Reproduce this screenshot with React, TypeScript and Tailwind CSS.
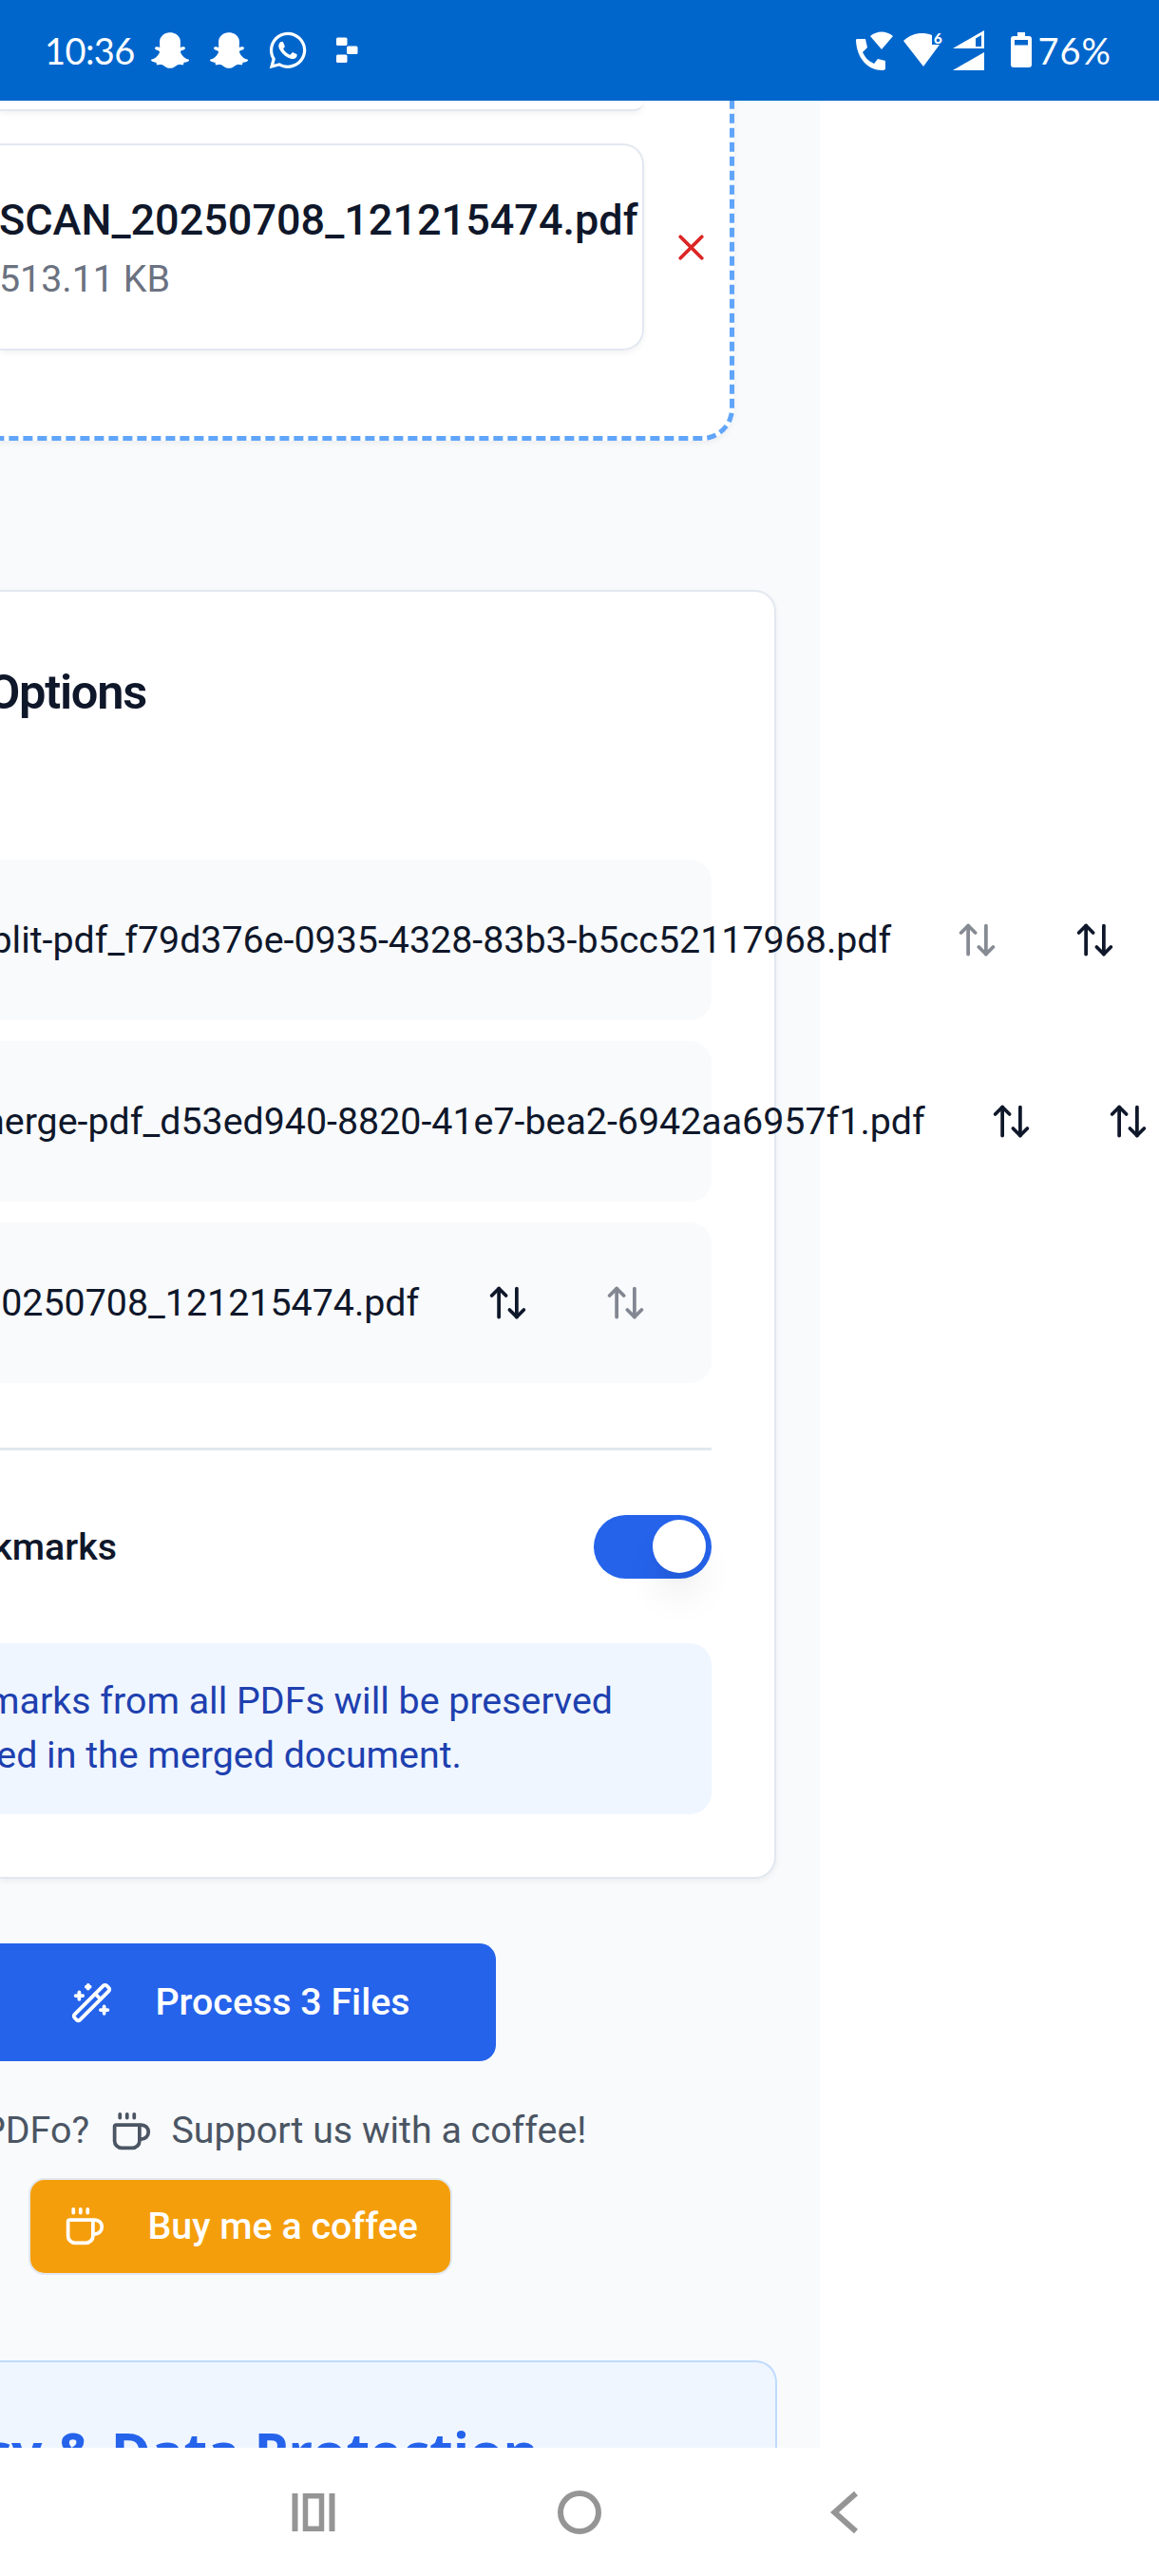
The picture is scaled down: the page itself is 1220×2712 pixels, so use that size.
import type { ReactNode } from "react";
import { ArrowUpDown, Coffee, WandSparkles, X } from "lucide-react";
import { FaSnapchatGhost, FaWhatsapp } from "react-icons/fa";

function StatusBar() {
  return (
    <header className="flex h-[106px] shrink-0 items-center justify-between bg-[#0066cc] pl-[47px] pr-[50px] text-white font-['Lato',sans-serif]">
      <div className="flex items-center">
        <span className="w-[111px] whitespace-nowrap text-[38px] leading-[44px] tracking-[-0.6px]">10:36</span>
        <FaSnapchatGhost className="ml-[1px] size-[40px]" />
        <FaSnapchatGhost className="ml-[22px] size-[40px]" />
        <FaWhatsapp className="ml-[20px] size-[44px]" />
        <svg className="ml-[28px] h-[28px] w-[24px]" viewBox="0 0 24 28" fill="currentColor">
          <rect x="1" y="0.5" width="11.5" height="8.5" rx="1.5" />
          <rect x="12" y="9.5" width="11.5" height="8.5" rx="1.5" />
          <rect x="1" y="18.5" width="11.5" height="8.5" rx="1.5" />
        </svg>
      </div>
      <div className="flex items-center">
        <svg className="h-[44px] w-[40px]" viewBox="0 0 40 44" fill="currentColor">
          <path d="M2 10h9l2 9-5 5c3 6 6 9 12 12l4-5 8 2v8c0 1-1 2-3 2C13 43 2 30 1 12c0-1 0-2 1-2z" />
          <path d="M16 7c7-6 17-6 24 0L28 21z" />
        </svg>
        <svg className="ml-[10px] h-[44px] w-[44px]" viewBox="0 0 44 44">
          <path fill="currentColor" d="M1 12C10 4 20 2 31 6v10h8L22 39z" />
          <text x="33" y="15" fill="currentColor" fontSize="15" fontWeight="900">6</text>
        </svg>
        <svg className="ml-[9px] h-[44px] w-[34px]" viewBox="0 0 34 44">
          <path fill="currentColor" fillRule="evenodd" d="M33 1v19H0zM30 6l-6 3.500v8.500h6z" />
          <path fill="currentColor" d="M33 24v19H0z" />
        </svg>
        <svg className="ml-[27px] h-[38px] w-[22px]" viewBox="0 0 22 38">
          <path fill="currentColor" fillRule="evenodd" d="M7 0h8v4h4a3 3 0 0 1 3 3v27a3 3 0 0 1-3 3H3a3 3 0 0 1-3-3V7a3 3 0 0 1 3-3h4zM4 8v5.500h14V8z" />
        </svg>
        <span className="ml-[6px] text-[38px] leading-[44px] tracking-[1px]">76%</span>
      </div>
    </header>
  );
}

function UploadedFiles() {
  return (
    <section className="-ml-[60px] -mt-[60px] h-[418px] w-[833px] rounded-[34px] border-[5px] border-dashed border-[#60a5fa] bg-white pl-[55px] pt-[55px] shadow-[0_3px_6px_rgba(0,0,0,0.05)]">
      <div className="h-[11px] w-[678px] rounded-br-[22px] border-b-2 border-[#e2e8f0] shadow-[0_3px_6px_rgba(0,0,0,0.05)]" />
      <div className="mt-[34px] flex items-center">
        <div className="h-[218px] w-[678px] rounded-r-[22px] border-y-2 border-r-2 border-[#e2e8f0] pt-[45px] shadow-[0_3px_6px_rgba(0,0,0,0.05)]">
          <p className="-ml-[1px] whitespace-nowrap text-[45px] font-medium leading-[67.5px] text-[#0f172a]">SCAN_20250708_121215474.pdf</p>
          <p className="-ml-[1px] text-[39.375px] leading-[56.25px] text-[#6b7280]">513.11 KB</p>
        </div>
        <X className="ml-[27px] size-[45px] text-[#dc2626]" />
      </div>
    </section>
  );
}

function SortButton({ disabled = false }: { disabled?: boolean }) {
  return (
    <button disabled={disabled} className="flex h-[101px] w-[112.5px] shrink-0 items-center justify-center disabled:opacity-50">
      <ArrowUpDown className="size-[45px]" />
    </button>
  );
}

function FileRow({ name, width, gap, first, last }: { name: string; width: string; gap: string; first?: boolean; last?: boolean }) {
  return (
    <div className="h-[168.75px] w-[749px] rounded-r-[22.5px] bg-[#f8fafc] text-[#0f172a]">
      <div className={"flex h-full items-center justify-end " + width}>
        <span className={"shrink-0 whitespace-nowrap text-[39.375px] " + gap}>{name}</span>
        <SortButton disabled={first} />
        <div className="ml-[11.25px] flex shrink-0">
          <SortButton disabled={last} />
        </div>
      </div>
    </div>
  );
}

function RightAligned({ className, children }: { className: string; children: ReactNode }) {
  return <div className={"flex justify-end whitespace-nowrap " + className}><span className="shrink-0">{children}</span></div>;
}

function Options() {
  return (
    <section className="mt-[157px] h-[1357px] w-[817px] rounded-r-[22.5px] border-y-2 border-r-2 border-[#e2e8f0] bg-white shadow-[0_3px_6px_rgba(0,0,0,0.05)]">
      <RightAligned className="mt-[71px] w-[154px] text-[50.625px] font-semibold leading-[70px] tracking-[-0.025em] text-[#0f172a]">Options</RightAligned>
      <div className="mt-[140.75px] flex flex-col gap-[22.5px]">
        <FileRow name="plit-pdf_f79d376e-0935-4328-83b3-b5cc52117968.pdf" width="w-[1208.5px]" gap="mr-[34px]" first />
        <FileRow name="merge-pdf_d53ed940-8820-41e7-bea2-6942aa6957f1.pdf" width="w-[1244px]" gap="mr-[34px]" />
        <FileRow name="0250708_121215474.pdf" width="w-[714.5px]" gap="mr-[37px]" last />
      </div>
      <div className="mt-[67.5px] h-[3px] w-[749px] bg-[#e2e8f0]" />
      <div className="mt-[68px] flex h-[67.5px] w-[749px] items-center justify-between">
        <RightAligned className="w-[123px] text-[39.375px] font-medium text-[#0f172a]">kmarks</RightAligned>
        <div className="flex h-[67.5px] w-[124px] items-center justify-end rounded-full bg-[#2563eb] pr-[6px]">
          <div className="size-[56.25px] rounded-full bg-white shadow-[0_28px_42px_-8px_rgba(0,0,0,0.1),0_11px_17px_-11px_rgba(0,0,0,0.1)]" />
        </div>
      </div>
      <div className="mt-[67.5px] h-[180px] w-[749px] rounded-r-[22.5px] bg-[#eff6ff] pt-[33.75px] text-[39.375px] leading-[56.25px] text-[#1e40af]">
        <RightAligned className="w-[645px]">marks from all PDFs will be preserved</RightAligned>
        <RightAligned className="w-[486px]">ed in the merged document.</RightAligned>
      </div>
    </section>
  );
}

function Actions() {
  return (
    <>
      <button className="mt-[68px] flex h-[124px] w-[522px] items-center rounded-r-[17px] bg-[#2563eb] pl-[74px] text-[39.375px] font-medium text-white">
        <WandSparkles className="size-[45px]" />
        <span className="ml-[44.5px]">Process 3 Files</span>
      </button>
      <div className="mt-[45px] flex h-[56px] items-center text-[39.375px] text-[#4b5563]">
        <RightAligned className="w-[94px]">PDFo?</RightAligned>
        <Coffee className="ml-[21px] mt-[3px] size-[45px]" />
        <span className="ml-[20.5px]">Support us with a coffee!</span>
      </div>
      <button className="ml-[30px] mt-[22px] flex h-[102px] w-[446px] items-center rounded-[17px] border-2 border-[#e2e8f0] bg-[#f59e0b] pl-[34px] text-[39.375px] font-medium text-white">
        <Coffee className="size-[45px]" />
        <span className="ml-[44.5px]">Buy me a coffee</span>
      </button>
    </>
  );
}

function PrivacyCard() {
  return (
    <section className="mt-[90px] h-[400px] w-[818px] rounded-tr-[22.5px] border-r-2 border-t-2 border-[#bfdbfe] bg-[#eff6ff] pt-[60px]">
      <RightAligned className="w-[567px] font-['Open_Sans',sans-serif] text-[57px] font-bold leading-[68px] text-[#2563eb]">cy &amp; Data Protection</RightAligned>
    </section>
  );
}

function NavBar() {
  return (
    <nav className="flex h-[135px] shrink-0 items-center bg-white pl-[307px] text-[#959595]">
      <svg className="h-[46px] w-[46px]" viewBox="0 0 46 46" fill="none" stroke="currentColor">
        <path strokeWidth="6" d="M3.500 3v40M42.500 3v40" />
        <path strokeWidth="5.5" d="M14.500 5.750h17v34.500h-17z" />
      </svg>
      <svg className="ml-[234px] h-[46px] w-[46px]" viewBox="0 0 46 46" fill="none" stroke="currentColor">
        <circle cx="23" cy="23" r="20" strokeWidth="6" />
      </svg>
      <svg className="ml-[241px] h-[46px] w-[30px]" viewBox="0 0 30 46" fill="none" stroke="currentColor">
        <path strokeWidth="6" d="M27 3 4.500 23 27 43" />
      </svg>
    </nav>
  );
}

export default function App() {
  return (
    <div className="flex h-[2712px] w-[1220px] flex-col overflow-hidden bg-white font-['Roboto',sans-serif]">
      <StatusBar />
      <main className="h-[2471px] shrink-0 overflow-hidden">
        <div className="flex h-full w-[863px] flex-col bg-[#f8fafc] *:shrink-0">
          <UploadedFiles />
          <Options />
          <Actions />
          <PrivacyCard />
        </div>
      </main>
      <NavBar />
    </div>
  );
}
